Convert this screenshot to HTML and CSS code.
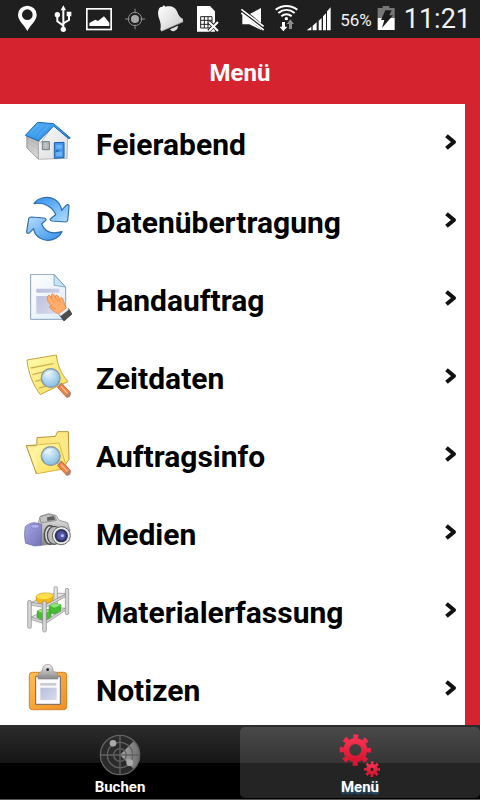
FILE: index.html
```html
<!DOCTYPE html>
<html lang="de">
<head>
<meta charset="utf-8">
<meta name="viewport" content="width=device-width, initial-scale=1">
<title>Menü</title>
<link rel="stylesheet" href="styles.css">
</head>
<body>
<svg class="defs" aria-hidden="true">
  <defs>
    <linearGradient id="blue" x1="0" y1="0" x2="1" y2="1"><stop offset="0" stop-color="#55b0f5"/><stop offset="1" stop-color="#2384e0"/></linearGradient>
    <linearGradient id="arrow" x1="0" y1="0" x2="1" y2="1"><stop offset="0" stop-color="#2f8eea"/><stop offset=".6" stop-color="#7cc0fa"/><stop offset="1" stop-color="#b5defe"/></linearGradient>
    <linearGradient id="arrow2" x1="0" y1="0" x2="1" y2="1"><stop offset="0" stop-color="#b9dffd"/><stop offset="1" stop-color="#2f8eea"/></linearGradient>
    <linearGradient id="wall" x1="0" y1="0" x2="1" y2="1"><stop offset="0" stop-color="#fff"/><stop offset="1" stop-color="#dcdcdc"/></linearGradient>
    <linearGradient id="side" x1="0" y1="0" x2="0" y2="1"><stop offset="0" stop-color="#b4b4b4"/><stop offset="1" stop-color="#e0e0e0"/></linearGradient>
    <linearGradient id="page" x1="0" y1="0" x2="1" y2="1"><stop offset="0" stop-color="#fff"/><stop offset="1" stop-color="#dcebf8"/></linearGradient>
    <linearGradient id="block" x1="0" y1="0" x2="1" y2="1"><stop offset="0" stop-color="#b9bedb"/><stop offset="1" stop-color="#d8dcee"/></linearGradient>
    <linearGradient id="yellow" x1="0" y1="0" x2="1" y2="1"><stop offset="0" stop-color="#fffbb0"/><stop offset="1" stop-color="#fbdc55"/></linearGradient>
    <radialGradient id="lens" cx=".4" cy=".3" r=".75"><stop offset="0" stop-color="#e2f4fd"/><stop offset="1" stop-color="#7fb9df"/></radialGradient>
    <linearGradient id="violet" x1="0" y1="0" x2="1" y2="1"><stop offset="0" stop-color="#a9a9ea"/><stop offset="1" stop-color="#7272b4"/></linearGradient>
    <linearGradient id="metal" x1="0" y1="0" x2="0" y2="1"><stop offset="0" stop-color="#ededed"/><stop offset="1" stop-color="#858585"/></linearGradient>
    <linearGradient id="orange" x1="0" y1="0" x2="1" y2="1"><stop offset="0" stop-color="#ffbd55"/><stop offset="1" stop-color="#ef8f22"/></linearGradient>
    <linearGradient id="sweep" x1="0" y1="0" x2="1" y2="0"><stop offset="0" stop-color="#aaa"/><stop offset="1" stop-color="#6c6c6c"/></linearGradient>
    <linearGradient id="gear" x1="0" y1="0" x2="0" y2="1"><stop offset="0" stop-color="#f4304f"/><stop offset="1" stop-color="#d71732"/></linearGradient>
    <linearGradient id="bell" x1="0" y1="0" x2="1" y2="1"><stop offset="0" stop-color="#fff"/><stop offset="1" stop-color="#c9c9c9"/></linearGradient>
    <g id="magnifier">
      <path d="M142 122l10-7 8 7-8 10z" fill="#c9c9c9" stroke="#777" stroke-width="1.500"/>
      <path d="M143 128l12-13 26 27-3 11-8 4z" fill="#f08243" stroke="#ad5228" stroke-width="2"/>
      <path d="M153 124l22 24" stroke="#ffc19c" stroke-width="4"/>
      <path d="M168 150l10-10 5 6-3 9-9 4z" fill="#b2846b"/>
      <circle cx="122" cy="99" r="28" fill="url(#lens)" stroke="#6e7d88" stroke-width="4"/>
      <circle cx="122" cy="99" r="28" fill="none" stroke="#b7c9d4" stroke-width="1.500"/>
      <path d="M102 96c3-13 15-20 28-16-11 2-20 7-28 16z" fill="#fff" opacity=".6"/>
    </g>
    <g id="chevron"><path d="M3 4l6 5-6 5" fill="none" stroke="#111" stroke-width="4" stroke-linecap="square" stroke-linejoin="round"/></g>
  </defs>
</svg>

<div class="screen">
  <div class="status">
    <div class="status-group">
      <svg class="status-icon" viewBox="27 0 108 114"><path fill="#fff" fill-rule="evenodd" d="M82 93C73 75 54 62 54 44a28 27 0 0 1 56 0c0 18-19 31-28 49zM82 28a16 16 0 1 0 0 32 16 16 0 0 0 0-32z"/></svg>
      <svg class="status-icon" viewBox="135 0 108 114"><g fill="none" stroke="#fff" stroke-width="6"><path d="M190 26v62M190 77l-18-13V46M190 70l17-10V43"/></g><path fill="#fff" d="M190 16l8 15h-16zM200 35h14v14h-14z"/><circle cx="172" cy="44" r="8" fill="#fff"/><circle cx="190" cy="88" r="8" fill="#fff"/></svg>
      <svg class="status-icon" viewBox="243 0 108 114"><rect x="260.500" y="26.500" width="73" height="62" fill="none" stroke="#fff" stroke-width="5"/><path fill="#fff" d="M268 78V69l18-10 8 4 18-14 16 19v10z"/></svg>
      <svg class="status-icon" viewBox="351 0 108 114"><g fill="none" stroke="#8f8f8f" stroke-width="3"><circle cx="405" cy="57" r="20"/><path d="M405 26v14M405 74v14M375 57h14M421 57h14"/></g><circle cx="405" cy="57" r="12" fill="#a9a9a9"/></svg>
      <svg class="status-icon" viewBox="459 0 108 114"><path fill="url(#bell)" d="M477 26c2-5 6-6 10-5 1-5 6-7 9-1 17-4 31 2 36 16 4 11 8 16 17 21v9l-64 28-4-5c3-13 0-22-3-31-5-14-5-24-1-32z"/><path fill="#ddd" d="M510 88l24-11c0 14-17 23-24 11z"/><path d="M484 94l66-29" stroke="#888" stroke-width="2"/></svg>
      <svg class="status-icon" viewBox="567 0 108 114"><path fill="#fff" d="M591 18h39l15 16v61h-54z"/><path d="M602 50h34v34h-34zM602 61h34M602 73h34M613 50v34M624 50v34" fill="none" stroke="#222" stroke-width="3"/><path d="M626 65l28 28M654 65l-28 28" stroke="#222" stroke-width="11"/><path d="M627 66l27 27M654 66l-27 27" stroke="#fff" stroke-width="6"/></svg>
    </div>
    <div class="status-group status-right">
      <svg class="signal-icon" viewBox="-12 0 99 114"><path fill="#fff" d="M7 43h21l35-19v66L28 73H7z"/><path d="M4 30l67 55" stroke="#1f1f1f" stroke-width="15"/><path d="M4 28l67 51M4 39l67 51" stroke="#fff" stroke-width="5"/></svg>
      <svg class="signal-icon" viewBox="87 0 99 114"><g fill="none" stroke="#fff" stroke-width="6"><path d="M107 29c19-15 46-15 65 0M115 39c15-12 34-12 49 0M124 49c9-8 22-8 31 0"/></g><circle cx="139" cy="56" r="5" fill="#fff"/><path fill="#fff" d="M126 66h9v14h7l-12 14-11-14h7z"/><path fill="#8c8c8c" d="M151 58l11 14h-6v15h-9V72h-7z"/></svg>
      <svg class="signal-icon" viewBox="186 0 99 114"><path fill="#fff" d="M200 91l14-11v11zM218 77l12-10v24h-12zM236 62l9-8v37h-9zM249 49l9-9v51h-9zM261 34l11-12v69h-11z"/></svg>
      <span class="percent">56%</span>
      <svg class="battery" viewBox="412 0 54 114"><path fill="#777" d="M414 24h15v-6h20v6h16v30h-51z"/><path fill="#fff" d="M414 54h51v36h-51z"/><path fill="#1b1b1b" d="M437 31h19l-7 15h11l-33 38 7-24h-10z"/></svg>
      <span class="clock">11:21</span>
    </div>
  </div>

  <header class="header"><h1 class="title">Menü</h1></header>

  <main class="content">
    <ul class="menu">
      <li><a class="item" href="#feierabend">
        <svg class="icon" viewBox="42 24 144 144"><path d="M50 77l43 20 38-53 42 39-2 62-85 3-35-34z" fill="url(#wall)" stroke="#999" stroke-width="2"/><path d="M51 78l34 15v54l-34-34z" fill="url(#side)" stroke="#888" stroke-width="2"/><path d="M53 88l32 18M53 99l32 20M53 109l32 23" stroke="#aaa" stroke-width="1"/><path d="M46 76l37-39 48 4 50 43-5 2-45-38-45 45z" fill="url(#blue)" stroke="#1768b5" stroke-width="3" stroke-linejoin="round"/><path d="M60 70l27-28M71 75l30-31M82 82l33-35" stroke="#79c2fa" stroke-width="1.500"/><path d="M97 95h21v24H97z" fill="#b2b8bc" stroke="#707a80" stroke-width="3"/><path d="M107 96v22M98 107h19" stroke="#ddd" stroke-width="1"/><path d="M133 98l29-1v46l-29 2z" fill="#4097ec" stroke="#1561b0" stroke-width="3"/><path d="M139 104h17v12h-17zM139 125h17v14h-17z" fill="#6bb5f5"/><path d="M137 123h9" stroke="#124b87" stroke-width="3"/></svg>
        <span class="label">Feierabend</span><svg class="chevron" viewBox="0 0 12 18"><use href="#chevron"/></svg></a></li>
      <li><a class="item" href="#datenuebertragung">
        <svg class="icon" viewBox="42 24 144 144"><g stroke="#2e6dad" stroke-width="3.500" stroke-linejoin="round"><path d="M72 47c11-18 41-25 61-13 14 8 20 20 22 33l13-15c5-4 10-2 9 3l-4 42c-1 3-3 5-6 5l-41-3c-6-1-7-5-3-8l14-11C129 58 103 41 72 47z" fill="url(#arrow)"/><path d="M156 131c-12 24-43 33-65 20-12-7-19-16-20-29l-12 12c-5 4-9 2-9-3l6-39c1-4 4-5 8-5l38 3c6 1 8 5 4 8l-11 10c9 24 32 31 61 23z" fill="url(#arrow2)"/></g></svg>
        <span class="label">Datenübertragung</span><svg class="chevron" viewBox="0 0 12 18"><use href="#chevron"/></svg></a></li>
      <li><a class="item" href="#handauftrag">
        <svg class="icon" viewBox="42 27 144 144"><path d="M62 28h70l35 38v97H62z" fill="url(#page)" stroke="#88a1bd" stroke-width="3"/><path d="M132 29l34 37-34-5z" fill="#c7e4f6" stroke="#6b93b8" stroke-width="2"/><path d="M79 71h69v12H79zM79 93h69v53H79z" fill="url(#block)"/><path d="M148 149l28-18 10 16-24 21z" fill="#4d4d50" stroke="#303035" stroke-width="2"/><path d="M144 145l26-18 6 7-24 19z" fill="#eee"/><path d="M113 99c-2-8 4-11 9-4l4 5-2-7c-1-8 6-9 9-2l3 6c-1-8 6-9 9-2l4 9c1-7 7-9 10-2 3 8 3 15 10 27l-24 18c-8-5-20-12-25-18-3-5 0-8 5-7-5-4-11-11-12-15-2-6 0-9 0-8z" fill="#ffad69" stroke="#df7b35" stroke-width="2"/><path d="M124 99l10 15M135 97l9 14M148 104l3 9M123 127l15 4" stroke="#df7b35" stroke-width="1.500" fill="none"/></svg>
        <span class="label">Handauftrag</span><svg class="chevron" viewBox="0 0 12 18"><use href="#chevron"/></svg></a></li>
      <li><a class="item" href="#zeitdaten">
        <svg class="icon" viewBox="42 21 144 144"><path d="M51 45l88-15c3 29 14 56 35 80-27 12-55 24-83 39C69 120 55 85 51 45z" fill="url(#yellow)" stroke="#c2a541" stroke-width="3"/><path d="M62 69l68-13M67 89l40-10M76 109l27-7M86 130l31-10" stroke="#cbb456" stroke-width="4"/><use href="#magnifier"/></svg>
        <span class="label">Zeitdaten</span><svg class="chevron" viewBox="0 0 12 18"><use href="#chevron"/></svg></a></li>
      <li><a class="item" href="#auftragsinfo">
        <svg class="icon" viewBox="42 21 144 144"><g stroke="#b8933a" stroke-width="3" stroke-linejoin="round"><path d="M78 151l3-107 55-4 7-14h32l2 84-22 28z" fill="#ffe884"/><path d="M49 68l98-8 24 76-90 16z" fill="url(#yellow)" stroke="#d9bb50"/><path d="M79 152L49 68h31" fill="#fff3a0"/></g><use href="#magnifier"/></svg>
        <span class="label">Auftragsinfo</span><svg class="chevron" viewBox="0 0 12 18"><use href="#chevron"/></svg></a></li>
      <li><a class="item" href="#medien">
        <svg class="icon" viewBox="42 24 144 144"><path d="M85 67l7-19 24-7 22 5 10 15 25 7 7 24-27 38-61 6z" fill="url(#metal)" stroke="#777" stroke-width="2"/><path d="M89 51l26-8 19 4 6 14-47 8z" fill="#c3c3c3" stroke="#777" stroke-width="2"/><path d="M111 52l20-4 5 11-24 4z" fill="#606060"/><path d="M46 80c6-7 17-12 28-12l21 5-2 63-18 2-28-8c-4-15-4-34-1-50z" fill="url(#violet)" stroke="#6060a0" stroke-width="2"/><ellipse cx="75" cy="79" rx="13" ry="6" fill="#b2b2ed" stroke="#7777b4" stroke-width="2"/><ellipse cx="120" cy="105" rx="17" ry="28" fill="#ddd" stroke="#555" stroke-width="5"/><ellipse cx="133" cy="106" rx="21" ry="27" fill="#bcbcbc" stroke="#555" stroke-width="4"/><circle cx="154" cy="107" r="27" fill="#ececec" stroke="#686868" stroke-width="3"/><circle cx="154" cy="107" r="20" fill="#32365e"/><circle cx="154" cy="107" r="13" fill="#5055a5"/><circle cx="157" cy="107" r="5" fill="#b4b9f4"/></svg>
        <span class="label">Medien</span><svg class="chevron" viewBox="0 0 12 18"><use href="#chevron"/></svg></a></li>
      <li><a class="item" href="#materialerfassung">
        <svg class="icon" viewBox="42 24 144 144"><g fill="#e4e4e4" stroke="#888" stroke-width="2"><path d="M63 73l73-28 34 2-66 34zM63 117l70-29 35 3-64 45z"/><rect x="132" y="26" width="10" height="70" rx="4"/></g><path d="M82 99l18-8 24 8-2 22-24 6-17-9z" fill="#48bd35" stroke="#2b9120" stroke-width="2"/><path d="M82 99l18-8 24 8-23 7z" fill="#8be675"/><path d="M118 82l14-7 21 6-2 20-20 7-14-8z" fill="#44bd32" stroke="#299520" stroke-width="2"/><path d="M118 82l14-7 21 6-20 8z" fill="#8be675"/><g fill="#d5d5d5" stroke="#888" stroke-width="2"><path d="M62 73l43 7 66-33v7l-66 35-43-8zM62 116l43 14 66-43v7l-66 44-43-14z"/></g><path d="M79 55c4-8 19-11 30-10 14 0 21 4 20 12l-3 12c-6 6-24 9-36 6-10-2-14-8-11-20z" fill="#f3b812" stroke="#c38f17" stroke-width="2"/><path d="M80 55c5-8 18-10 29-9 12 0 20 4 19 8-7 8-19 10-30 10-11-1-17-3-18-9z" fill="#ffdf48"/><g fill="#d5d5d5" stroke="#888" stroke-width="2"><rect x="53" y="67" width="11" height="84" rx="5"/><rect x="98" y="69" width="11" height="93" rx="5"/><rect x="166" y="31" width="10" height="79" rx="5"/></g></svg>
        <span class="label">Materialerfassung</span><svg class="chevron" viewBox="0 0 12 18"><use href="#chevron"/></svg></a></li>
      <li><a class="item" href="#notizen">
        <svg class="icon" viewBox="42 27 144 144"><rect x="58" y="52" width="112" height="112" rx="9" fill="url(#orange)" stroke="#d78222" stroke-width="3"/><path d="M77 64h74v84H77z" fill="#fafaff" stroke="#74665f" stroke-width="3"/><path d="M91 84h48v8H91z" fill="#cbcbd3"/><path d="M91 98h49v37H91z" fill="url(#block)"/><path d="M84 72V60c0-7 5-9 12-10 1-14 7-22 17-22s16 8 17 22c8 1 14 3 14 10v12z" fill="url(#metal)" stroke="#8b8b8b" stroke-width="2"/><circle cx="113" cy="44" r="4" fill="#222"/></svg>
        <span class="label">Notizen</span><svg class="chevron" viewBox="0 0 12 18"><use href="#chevron"/></svg></a></li>
    </ul>
  </main>

  <nav class="tabs">
    <a class="tab" href="#buchen">
      <svg class="tab-icon" viewBox="0 0 132 132"><circle cx="66" cy="66" r="60" fill="#2b2b2b"/><path d="M66 66L108 23a60 60 0 0 1 0 86z" fill="url(#sweep)"/><g fill="none" stroke="#626262" stroke-width="4"><circle cx="66" cy="66" r="59"/><circle cx="66" cy="66" r="38"/><circle cx="66" cy="66" r="19"/><path d="M66 6v120M6 66h120"/></g><circle cx="45" cy="31" r="10" fill="#aaa"/><circle cx="95" cy="89" r="10" fill="#aaa"/></svg>
      <span>Buchen</span>
    </a>
    <a class="tab tab-active" href="#menue" aria-current="page">
      <svg class="tab-icon" viewBox="834 50 132 132"><g fill="none" stroke="url(#gear)"><circle cx="886" cy="101" r="27" stroke-width="18"/><circle cx="886" cy="101" r="40" stroke-width="14" stroke-dasharray="15 16.400" stroke-dashoffset="7.500"/><circle cx="936" cy="159" r="11" stroke-width="12"/><circle cx="936" cy="159" r="20" stroke-width="8" stroke-dasharray="8 7.700" stroke-dashoffset="4"/></g></svg>
      <span>Menü</span>
    </a>
  </nav>
</div>
</body>
</html>
```
FILE: styles.css
```css
* { box-sizing: border-box; }

body {
  margin: 0;
  font-family: Roboto, "Noto Sans", sans-serif;
  background: #d5242f;
}

.defs { position: absolute; width: 0; height: 0; }

.screen {
  display: flex;
  flex-direction: column;
  height: 100vh;
}

.status {
  display: flex;
  flex: none;
  align-items: center;
  justify-content: space-between;
  height: 38px;
  padding: 0 9px;
  background: #1f1f1f;
  color: #f2f2f2;
}

.status-group { display: flex; align-items: center; }
.status-icon { width: 36px; height: 38px; }
.signal-icon { width: 33px; height: 38px; }
.percent { margin: 2px 5px 0 5px; font-size: 17px; }
.battery { width: 18px; height: 38px; }
.clock { margin-left: 9px; font-size: 27px; }

.header {
  display: flex;
  flex: none;
  align-items: center;
  justify-content: center;
  height: 66px;
  padding-top: 4px;
  background: #d5242f;
}

.title {
  margin: 0;
  color: #fff;
  font-size: 24px;
  font-weight: 700;
}

.content {
  flex: 1;
  min-height: 0;
  margin-right: 15px;
  overflow: hidden;
  background: #fff;
}

.menu { margin: 0; padding: 0; list-style: none; }

.item {
  display: flex;
  align-items: center;
  height: 78px;
  padding: 0 8px 2px 24px;
  color: #000;
  text-decoration: none;
}

.icon { flex: none; width: 48px; height: 48px; }
.label {
  flex: 1;
  padding: 4px 0 0 24px;
  font-size: 30px;
  font-weight: 700;
}
.chevron { flex: none; width: 12px; height: 18px; }

.tabs {
  display: flex;
  flex: none;
  height: 75px;
  padding: 2px 0 1px;
  border-bottom: 1px solid #555;
  background: linear-gradient(#2c2c2c, #151515 38px, #000 38px);
}

.tab {
  display: flex;
  flex: 1;
  flex-direction: column;
  align-items: center;
  padding-top: 6px;
  color: #fff;
  font-size: 15px;
  font-weight: 700;
  line-height: 18px;
  text-decoration: none;
}

.tab-icon { width: 44px; height: 44px; margin-bottom: 1px; }

.tab-active {
  border-radius: 5px;
  background: linear-gradient(#494949, #353535 36px, #242424 36px);
  text-shadow: 0 2px 2px #2b6390;
}
```
